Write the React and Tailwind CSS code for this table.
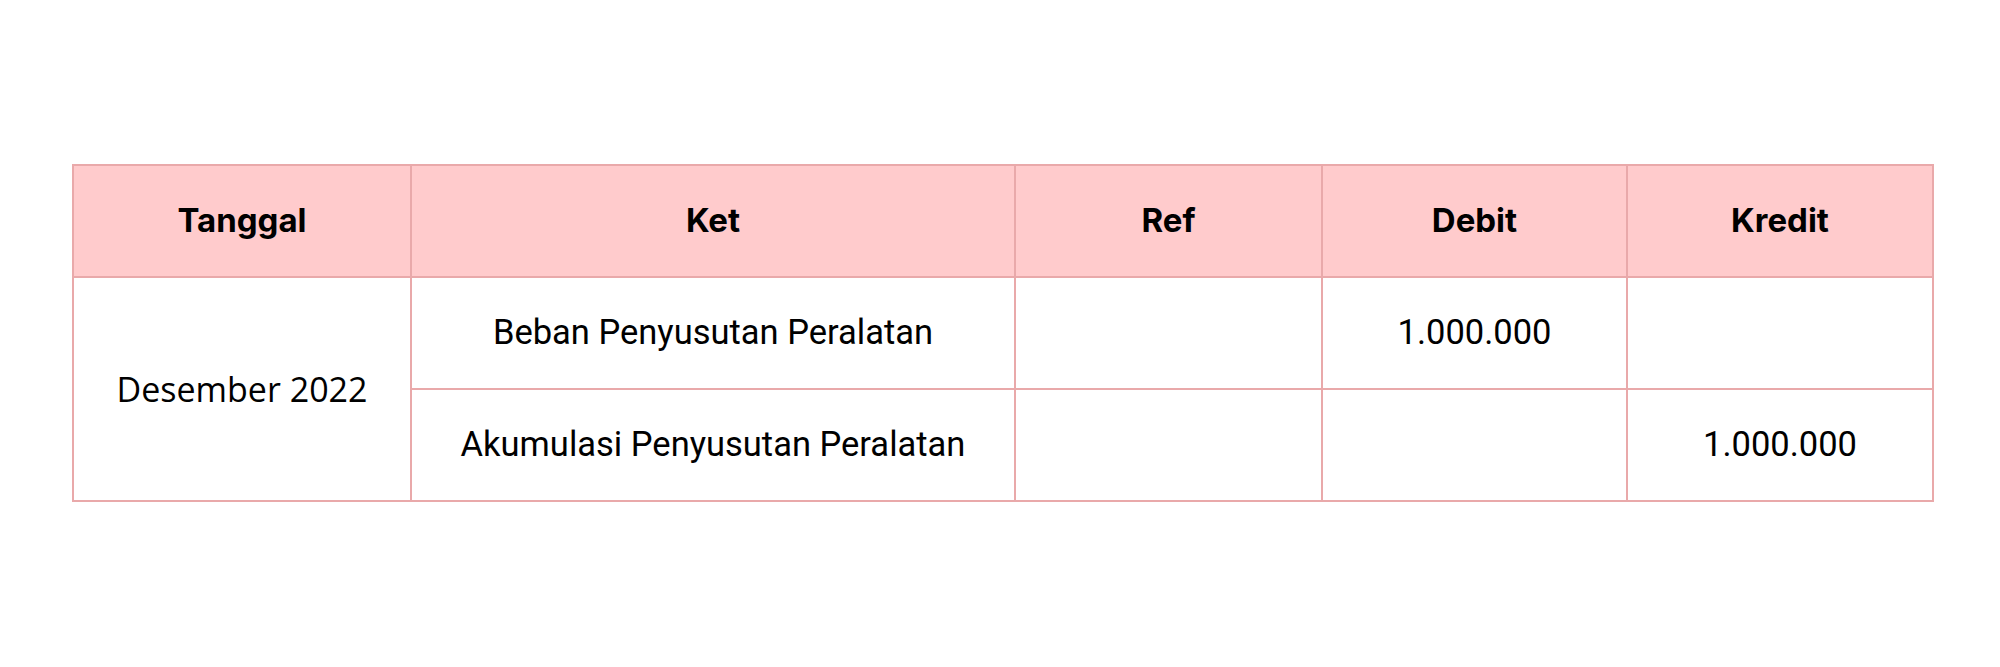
export default function App() {
  const head = ["Tanggal", "Ket", "Ref", "Debit", "Kredit"]
  const widths = ["w-[338px]", "w-[604px]", "w-[307px]", "w-[305px]", "w-[306px]"]
  const cell = "border-2 border-[#e9a9aa] text-center align-middle h-[112px] p-0"

  return (
    <div className="w-[2000px] h-[667px] bg-white pt-[164px] pl-[72px]">
      <table className="table-fixed border-collapse w-[1860px] text-black">
        <thead>
          <tr className="bg-[#ffcbcc]">
            {head.map((h, i) => (
              <th
                key={h}
                className={`${cell} ${widths[i]} font-bold text-[33px] font-['Inter',sans-serif]`}
              >
                {h}
              </th>
            ))}
          </tr>
        </thead>
        <tbody className="text-[34.5px] font-['Roboto',sans-serif]">
          <tr>
            <td rowSpan={2} className={`${cell} font-['Open_Sans',sans-serif] text-[34px]`}>
              Desember 2022
            </td>
            <td className={cell}>Beban Penyusutan Peralatan</td>
            <td className={cell}></td>
            <td className={cell}>1.000.000</td>
            <td className={cell}></td>
          </tr>
          <tr>
            <td className={cell}>Akumulasi Penyusutan Peralatan</td>
            <td className={cell}></td>
            <td className={cell}></td>
            <td className={cell}>1.000.000</td>
          </tr>
        </tbody>
      </table>
    </div>
  )
}
